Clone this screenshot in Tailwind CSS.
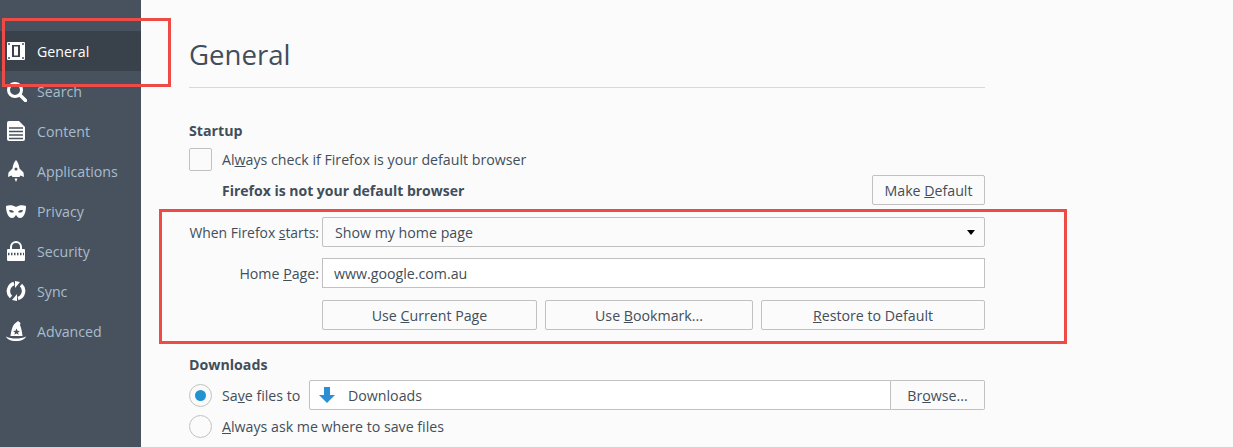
<!DOCTYPE html>
<html lang="en">
<head>
    <meta charset="UTF-8">
    <meta name="viewport" content="width=device-width, initial-scale=1.0">
    <title>General</title>
    <script src="https://cdn.jsdelivr.net/npm/@tailwindcss/browser@4"></script>
</head>
<body class="relative h-[447px] w-[1233px] overflow-hidden bg-[#fbfbfb] font-['Open_Sans',sans-serif] text-[14.2px] leading-[21px] text-[#424e5a]">
    <div class="flex h-full">
        <!-- sidebar -->
        <nav class="w-[141px] shrink-0 bg-[#47525e] pt-[31px] text-[#a9bccd]">
            <div class="flex h-10 items-center bg-[#39424b] text-white">
                <svg class="mx-[7px] h-[18px] w-[18px]" viewBox="0 0 18 18"><path fill="#fff" fill-rule="evenodd" d="M1 0h16a1 1 0 0 1 1 1v16a1 1 0 0 1-1 1H1a1 1 0 0 1-1-1V1a1 1 0 0 1 1-1zM5 3v12h8V3zM7 4.500h4v9H7z"/><circle cx="2" cy="2" r="1" fill="#47525e"/><circle cx="16" cy="2" r="1" fill="#47525e"/><circle cx="2" cy="16" r="1" fill="#47525e"/><circle cx="16" cy="16" r="1" fill="#47525e"/></svg>
                <span class="ml-[5px]">General</span>
            </div>
            <div class="flex h-10 items-center">
                <svg class="mx-[6px] h-[21px] w-[21px]" viewBox="0 0 21 21" fill="none" stroke="#fff"><circle cx="9" cy="9" r="6.500" stroke-width="3"/><path d="M14 14l5.500 5.500" stroke-width="3.500" stroke-linecap="round"/></svg>
                <span class="ml-[4px]">Search</span>
            </div>
            <div class="flex h-10 items-center">
                <svg class="mx-[7px] h-[20px] w-[18px]" viewBox="0 0 18 20"><path fill="#fff" d="M2 0h10l6 6v12a2 2 0 0 1-2 2H2a2 2 0 0 1-2-2V2a2 2 0 0 1 2-2z"/><path stroke="#47525e" stroke-width="1.500" d="M2 7h14M2 10.500h14M2 14h14M2 17.500h14"/></svg>
                <span class="ml-[5px]">Content</span>
            </div>
            <div class="flex h-10 items-center">
                <svg class="mr-[5px] ml-[8px] h-[22px] w-[16px]" viewBox="0 0 16 22"><path fill="#fff" d="M8 0c2 2 3 5 3.500 8.500l4 4 .5 4.500-3.500-1.500-1 1.500h-7l-1-1.500L0 17l.5-4.500 4-4C5 5 6 2 8 0zM6.500 18.500h3L8 22z"/><circle cx="8" cy="9" r="1.500" fill="#47525e"/></svg>
                <span class="ml-[8px]">Applications</span>
            </div>
            <div class="flex h-10 items-center">
                <svg class="mx-[6px] h-[13px] w-[20px]" viewBox="0 0 20 13"><path fill="#fff" fill-rule="evenodd" d="M0 1c3-1 7-1 10 1 3-2 7-2 10-1 0 6-2 12-6 12-2 0-3-2-4-3-1 1-2 3-4 3C2 13 0 7 0 1zM3 5.500c1 2.500 4 2.500 5 1.500-1-1.500-3-2.500-5-1.500zM17 5.500c-1 2.500-4 2.500-5 1.500 1-1.500 3-2.500 5-1.500z"/></svg>
                <span class="ml-[5px]">Privacy</span>
            </div>
            <div class="flex h-10 items-center">
                <svg class="mx-[7px] h-[20px] w-[18px]" viewBox="0 0 18 20"><path fill="none" stroke="#fff" stroke-width="2" d="M4 9V6a5 5 0 0 1 10 0v3"/><path fill="#fff" d="M1 8h16a1 1 0 0 1 1 1v10a1 1 0 0 1-1 1H1a1 1 0 0 1-1-1V9a1 1 0 0 1 1-1z"/><path stroke="#47525e" stroke-width="2.500" stroke-dasharray="1.500 1.500" d="M1 13h16"/></svg>
                <span class="ml-[5px]">Security</span>
            </div>
            <div class="flex h-10 items-center">
                <svg class="mx-[6px] h-[20px] w-[20px]" viewBox="0 0 20 20" fill="none" stroke="#fff" stroke-width="3.500"><path d="M8 2.500A8 8 0 0 0 5 16"/><path d="M12 17.500A8 8 0 0 0 15 4"/><path fill="#fff" stroke="none" d="M9 0l5 1-5 6zM11 20l-5-1 5-6z"/></svg>
                <span class="ml-[5px]">Sync</span>
            </div>
            <div class="flex h-10 items-center">
                <svg class="mx-[6px] h-[20px] w-[20px]" viewBox="0 0 20 20"><path fill="#fff" d="M12 0L9.500 2C7 3.500 5.500 8 4.500 15h12c-.5-4-1-7.500-2.500-11l.5-2zM0 15.500C1 18 4 20 10 20s9-2 10-4.500c-3 1.500-6 2-10 2s-7-.5-10-2z"/><path fill="#47525e" d="M10.500 7.500l1 2.300 2.400.1-1.900 1.500.7 2.400-2.200-1.400-2.200 1.400.7-2.400-1.900-1.500 2.400-.1z"/></svg>
                <span class="ml-[5px]">Advanced</span>
            </div>
        </nav>

        <!-- main pane -->
        <main class="w-[844px] pl-[48px]">
            <h1 class="flex h-[88px] items-center border-b border-[#d8d8d8] pt-[22px] text-[27.6px] font-normal">General</h1>

            <h2 class="mt-[33px] h-[19px] leading-[19px] font-bold">Startup</h2>
            <label class="mt-[8px] flex h-[23px] items-center">
                <span class="h-[23px] w-[23px] rounded-[2px] border border-[#c1c1c1] bg-[#fbfbfb]"></span>
                <span class="ml-[10px]">Al<u>w</u>ays check if Firefox is your default browser</span>
            </label>
            <div class="mt-[4px] flex h-[30px] items-center justify-between pl-[33px]">
                <strong class="text-[14px] font-bold">Firefox is not your default browser</strong>
                <button class="h-[30px] w-[113px] rounded-[2px] border border-[#c1c1c1] bg-[#fbfbfb]">Make <u>D</u>efault</button>
            </div>

            <div class="mt-[12px] flex h-[30px] items-center">
                <span class="w-[130px] text-right text-[13.9px] whitespace-nowrap">When Firefox <u>s</u>tarts:</span>
                <div class="ml-[3px] flex h-[30px] w-[663px] items-center justify-between rounded-[2px] border border-[#c1c1c1] pr-[9px] pl-[12px]">
                    <span>Show my home page</span>
                    <span class="h-0 w-0 border-x-[4px] border-t-[5px] border-x-transparent border-t-black"></span>
                </div>
            </div>
            <div class="mt-[11px] flex h-[30px] items-center">
                <span class="w-[130px] text-right">Home <u>P</u>age:</span>
                <div class="ml-[3px] flex h-[30px] w-[663px] items-center border border-[#c1c1c1] bg-white pl-[11px]">www.google.com.au</div>
            </div>
            <div class="mt-[12px] ml-[133px] flex h-[30px] gap-[8px]">
                <button class="w-[215px] rounded-[2px] border border-[#c1c1c1]">Use <u>C</u>urrent Page</button>
                <button class="w-[208px] rounded-[2px] border border-[#c1c1c1]">Use <u>B</u>ookmark...</button>
                <button class="w-[224px] rounded-[2px] border border-[#c1c1c1]"><u>R</u>estore to Default</button>
            </div>

            <h2 class="mt-[25px] h-[19px] leading-[19px] font-bold">Downloads</h2>
            <div class="mt-[6px] flex h-[30px] items-center">
                <span class="flex h-[23px] w-[23px] items-center justify-center rounded-full border border-[#c1c1c1]">
                    <span class="h-[11px] w-[11px] rounded-full bg-[#2292d0]"></span>
                </span>
                <span class="ml-[10px] w-[87px] whitespace-nowrap">Sa<u>v</u>e files to</span>
                <div class="flex h-[30px] w-[676px]">
                    <div class="flex flex-1 items-center rounded-l-[2px] border border-[#c1c1c1] bg-white pl-[9px]">
                        <svg class="h-[16px] w-[16px]" viewBox="0 0 16 16"><path fill="#2b8fd6" d="M5 0h6v8h5l-8 8-8-8h5z"/></svg>
                        <span class="ml-[13px]">Downloads</span>
                    </div>
                    <button class="w-[94px] rounded-r-[2px] border border-l-0 border-[#c1c1c1]">Br<u>o</u>wse...</button>
                </div>
            </div>
            <label class="mt-[5px] flex h-[23px] items-center">
                <span class="h-[23px] w-[23px] rounded-full border border-[#c1c1c1]"></span>
                <span class="ml-[10px]"><u>A</u>lways ask me where to save files</span>
            </label>
        </main>
    </div>

    <!-- red annotation boxes -->
    <div class="absolute top-[18px] left-[2px] h-[69px] w-[169px] border-[3px] border-[#ef4b46]"></div>
    <div class="absolute top-[209px] left-[159px] h-[135px] w-[908px] border-[3px] border-[#ef4b46]"></div>
</body>
</html>
